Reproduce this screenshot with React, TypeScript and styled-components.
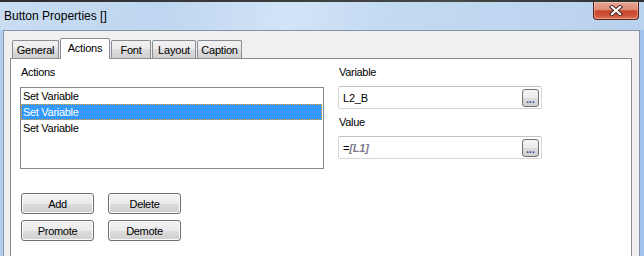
import React from 'react';
import styled, { createGlobalStyle } from 'styled-components';

const GlobalStyle = createGlobalStyle`
  html, body {
    margin: 0;
    padding: 0;
    overflow: hidden;
    background: #ffffff;
  }
  body {
    font-family: 'Liberation Sans', Arial, sans-serif;
  }
`;

const Window = styled.div`
  width: 644px;
  height: 256px;
  display: flex;
  flex-direction: column;
  overflow: hidden;
  background: linear-gradient(180deg, #bfd7f0 0%, #b3cdea 100%);
`;

const TopEdge = styled.div`
  height: 2px;
  background: linear-gradient(90deg, #2e2e2e 0%, #3b3b3b 40%, #444a44 70%, #2f2f2f 100%);
`;

const TitleBar = styled.div`
  height: 28px;
  display: flex;
  align-items: flex-start;
  padding-left: 4px;
  background: linear-gradient(100deg, #c9ddf3 0%, #bed6f0 25%, #d2e4f7 45%, #c3daf2 60%, #b9d2ed 100%);
`;

const Title = styled.div`
  margin-top: 7px;
  font-size: 12px;
  line-height: 14px;
  color: #000000;
`;

const CloseButton = styled.div`
  margin-left: auto;
  margin-right: 5px;
  width: 44px;
  height: 17px;
  display: flex;
  align-items: center;
  justify-content: center;
  border: 1px solid #5e2219;
  border-top: none;
  border-radius: 0 0 4px 4px;
  background: linear-gradient(180deg, #e7a595 0%, #dd8a74 45%, #c9462d 52%, #cf5339 80%, #dd7e62 100%);
  box-shadow: inset 0 0 0 1px rgba(255, 255, 255, 0.3);
`;

const Body = styled.div`
  flex: 1;
  display: flex;
  padding: 0 4px 0 3px;
  background: linear-gradient(90deg, #b3cfee 0%, #b3cfee 1%, #c2d9f1 1%, #c2d9f1 99%, #9fc3ea 99%);
`;

const Client = styled.div`
  flex: 1;
  display: flex;
  flex-direction: column;
  padding: 7px 7px 0 6px;
  background: #f0f0f0;
  border: 1px solid #8593a5;
  border-bottom: none;
`;

const TabStrip = styled.div`
  height: 20px;
  display: flex;
  align-items: flex-end;
  padding-left: 2px;
`;

const Tab = styled.div<{ $active?: boolean; $width: number }>`
  position: relative;
  z-index: ${({ $active }) => ($active ? 2 : 1)};
  box-sizing: border-box;
  width: ${({ $width }) => $width}px;
  height: ${({ $active }) => ($active ? 21 : 18)}px;
  margin-bottom: ${({ $active }) => ($active ? -1 : 0)}px;
  margin-right: 1px;
  display: flex;
  align-items: center;
  justify-content: center;
  padding-bottom: ${({ $active }) => ($active ? 2 : 0)}px;
  border: 1px solid #898c95;
  border-bottom: none;
  border-radius: 2px 2px 0 0;
  background: ${({ $active }) =>
    $active ? '#ffffff' : 'linear-gradient(180deg, #f2f2f2 0%, #ebebeb 50%, #dddddd 50%, #cfcfcf 100%)'};
  font-size: 11px;
  letter-spacing: -0.2px;
  color: #000000;
`;

const TabPanel = styled.div`
  flex: 1;
  display: flex;
  gap: 14px;
  padding: 7px 0 0 9px;
  background: #ffffff;
  border: 1px solid #898c95;
  border-bottom: none;
`;

const Column = styled.div`
  display: flex;
  flex-direction: column;
`;

const FieldLabel = styled.div<{ $gapAbove?: number }>`
  margin-top: ${({ $gapAbove }) => $gapAbove ?? 0}px;
  margin-bottom: 7px;
  padding-left: 1px;
  font-size: 11px;
  line-height: 13px;
  letter-spacing: -0.3px;
  color: #000000;
`;

const ListBox = styled.div`
  box-sizing: border-box;
  width: 304px;
  height: 82px;
  margin-top: 1px;
  border: 1px solid #828790;
  background: #ffffff;
`;

const ListRow = styled.div<{ $selected?: boolean }>`
  height: 16px;
  margin: 0 1px 0 0;
  padding-left: 2px;
  box-sizing: border-box;
  display: flex;
  align-items: center;
  font-size: 11px;
  letter-spacing: -0.3px;
  color: ${({ $selected }) => ($selected ? '#ffffff' : '#000000')};
  background: ${({ $selected }) => ($selected ? '#3399ff' : 'transparent')};
  outline: ${({ $selected }) => ($selected ? '1px dotted #e8a040' : 'none')};
  outline-offset: -1px;
`;

const ButtonGrid = styled.div`
  display: grid;
  grid-template-columns: 73px 73px;
  column-gap: 14px;
  row-gap: 6px;
  margin: 24px 0 0 1px;
`;

const PushButton = styled.div`
  box-sizing: border-box;
  height: 21px;
  display: flex;
  align-items: center;
  justify-content: center;
  border: 1px solid #707070;
  border-radius: 3px;
  background: linear-gradient(180deg, #f2f2f2 0%, #ebebeb 50%, #dddddd 50%, #cfcfcf 100%);
  box-shadow: inset 0 0 0 1px #fbfbfb;
  font-size: 11px;
  letter-spacing: -0.3px;
  color: #000000;
`;

const TextField = styled.div`
  box-sizing: border-box;
  width: 204px;
  height: 23px;
  display: flex;
  align-items: center;
  padding: 0 2px 0 4px;
  border: 1px solid #d6d6d6;
  border-top-color: #c4c4c4;
  border-radius: 2px;
  background: #ffffff;
`;

const FieldValue = styled.div`
  flex: 1;
  font-size: 11px;
  letter-spacing: -0.2px;
  color: #000000;
`;

const Expression = styled.span`
  color: #7c7c8c;
  font-style: italic;
  font-weight: bold;
`;

const EllipsisButton = styled.div`
  box-sizing: border-box;
  width: 17px;
  height: 18px;
  display: flex;
  align-items: flex-end;
  justify-content: center;
  padding-bottom: 3px;
  border: 1px solid #707070;
  border-radius: 3px;
  background: linear-gradient(180deg, #f4f4f4 0%, #ebebeb 50%, #dcdcdc 50%, #d0d0d0 100%);
  font-size: 10px;
  line-height: 6px;
  font-weight: bold;
  color: #3a3a9a;
`;

const tabs = [
  { label: 'General', width: 47 },
  { label: 'Actions', width: 50, active: true },
  { label: 'Font', width: 40 },
  { label: 'Layout', width: 44 },
  { label: 'Caption', width: 45 },
];

const actions = ['Set Variable', 'Set Variable', 'Set Variable'];

function CloseGlyph() {
  return (
    <svg width="14" height="11" viewBox="0 0 14 11">
      <path d="M3 2 L11 9 M11 2 L3 9" stroke="#4a2a26" strokeWidth="4.2" strokeLinecap="square" />
      <path d="M3 2 L11 9 M11 2 L3 9" stroke="#ffffff" strokeWidth="2.2" strokeLinecap="square" />
    </svg>
  );
}

export default function App() {
  return (
    <>
      <GlobalStyle />
      <Window>
        <TopEdge />
        <TitleBar>
          <Title>Button Properties []</Title>
          <CloseButton>
            <CloseGlyph />
          </CloseButton>
        </TitleBar>
        <Body>
          <Client>
            <TabStrip>
              {tabs.map((tab) => (
                <Tab key={tab.label} $active={tab.active} $width={tab.width}>
                  {tab.label}
                </Tab>
              ))}
            </TabStrip>
            <TabPanel>
              <Column>
                <FieldLabel>Actions</FieldLabel>
                <ListBox>
                  {actions.map((name, index) => (
                    <ListRow key={index} $selected={index === 1}>
                      {name}
                    </ListRow>
                  ))}
                </ListBox>
                <ButtonGrid>
                  <PushButton>Add</PushButton>
                  <PushButton>Delete</PushButton>
                  <PushButton>Promote</PushButton>
                  <PushButton>Demote</PushButton>
                </ButtonGrid>
              </Column>
              <Column>
                <FieldLabel>Variable</FieldLabel>
                <TextField>
                  <FieldValue>L2_B</FieldValue>
                  <EllipsisButton>...</EllipsisButton>
                </TextField>
                <FieldLabel $gapAbove={7}>Value</FieldLabel>
                <TextField>
                  <FieldValue>
                    =<Expression>[L1]</Expression>
                  </FieldValue>
                  <EllipsisButton>...</EllipsisButton>
                </TextField>
              </Column>
            </TabPanel>
          </Client>
        </Body>
      </Window>
    </>
  );
}
